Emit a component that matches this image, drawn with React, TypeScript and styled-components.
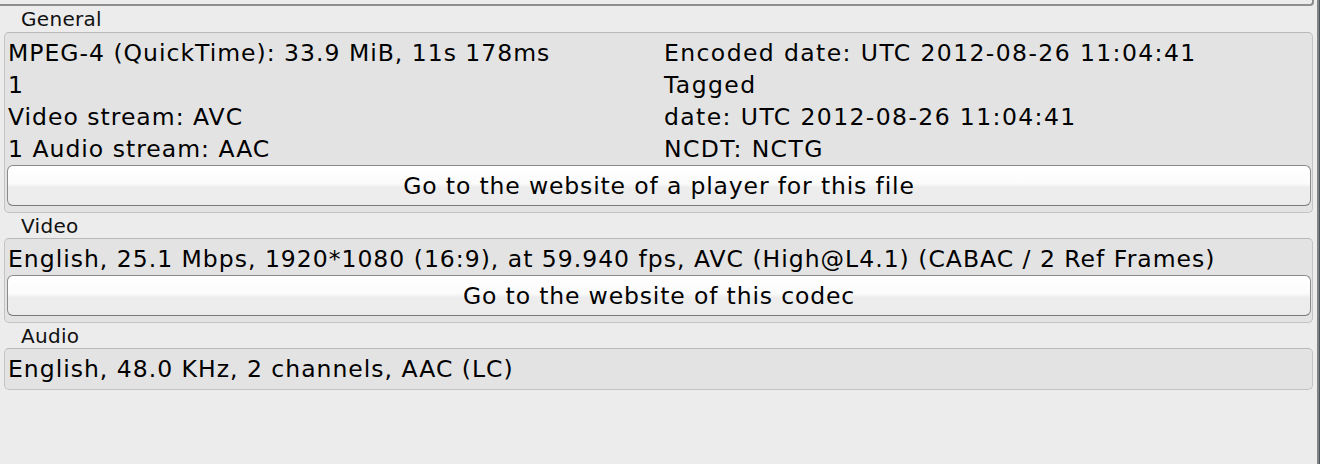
import React from "react";
import styled, { createGlobalStyle } from "styled-components";

const Global = createGlobalStyle`
  html, body { margin: 0; padding: 0; background: #ececec; }
  body { width: 1320px; height: 464px; overflow: hidden; font-family: "DejaVu Sans", "Liberation Sans", sans-serif; }
`;

const Window = styled.div`
  display: flex;
  width: 1320px;
  height: 464px;
  background: #ececec;
`;

const Main = styled.div`
  width: 1317px;
  display: flex;
  flex-direction: column;
  padding: 0 4px 0 4px;
  box-sizing: border-box;
`;

const EdgeLine = styled.div`
  width: 2px;
  background: #848484;
`;

const EdgeDark = styled.div`
  width: 1px;
  background: #4c5663;
`;

const TopStub = styled.div`
  margin-left: -4px;
  width: 1314px;
  height: 6px;
  box-sizing: border-box;
  border-bottom: 2px solid #8e8e8e;
  border-right: 2px solid #8e8e8e;
  border-bottom-right-radius: 4px;
`;

const Label = styled.div<{ $h: number }>`
  height: ${(p) => p.$h}px;
  display: flex;
  align-items: center;
  padding-left: 17px;
  font-size: 20px;
  letter-spacing: 0.3px;
  color: #111;
`;

const Box = styled.div`
  border: 1px solid #c3c3c3;
  border-top-color: #b9b9b9;
  border-radius: 5px;
  background: #e3e3e3;
  padding: 4px 1px 6px 2px;
  display: flex;
  flex-direction: column;
`;

const SingleBox = styled(Box)`
  padding-bottom: 4px;
`;

const Grid = styled.div`
  display: grid;
  grid-template-columns: 656px 1fr;
  padding-left: 1px;
`;

const Column = styled.div<{ $spacing?: number }>`
  letter-spacing: ${(p) => p.$spacing ?? 1}px;
`;

const Line = styled.div`
  height: 32px;
  line-height: 32px;
  font-size: 23.5px;
  color: #000;
  white-space: nowrap;
`;

const Button = styled.button`
  height: 41px;
  width: 100%;
  box-sizing: border-box;
  border: 1px solid #8a8a8a;
  border-bottom-color: #7a7a7a;
  border-radius: 6px;
  background: linear-gradient(#ffffff 0%, #fbfbfb 45%, #ededed 55%, #ececec 100%);
  font-family: "DejaVu Sans", "Liberation Sans", sans-serif;
  font-size: 23.5px;
  letter-spacing: 0.85px;
  color: #000;
  padding: 0;
  display: flex;
  align-items: center;
  justify-content: center;
`;

export default function App() {
  return (
    <>
      <Global />
      <Window>
        <Main>
          <TopStub />
          <Label $h={26}>General</Label>
          <Box>
            <Grid>
              <Column>
                <Line>MPEG-4 (QuickTime): 33.9 MiB, 11s 178ms</Line>
                <Line>1</Line>
                <Line>Video stream: AVC</Line>
                <Line>1 Audio stream: AAC</Line>
              </Column>
              <Column $spacing={1.4}>
                <Line>Encoded date: UTC 2012-08-26 11:04:41</Line>
                <Line>Tagged</Line>
                <Line>date: UTC 2012-08-26 11:04:41</Line>
                <Line>NCDT: NCTG</Line>
              </Column>
            </Grid>
            <Button>Go to the website of a player for this file</Button>
          </Box>
          <Label $h={25}>Video</Label>
          <Box>
            <Grid>
              <Column>
                <Line>English, 25.1 Mbps, 1920*1080 (16:9), at 59.940 fps, AVC (High@L4.1) (CABAC / 2 Ref Frames)</Line>
              </Column>
            </Grid>
            <Button>Go to the website of this codec</Button>
          </Box>
          <Label $h={25}>Audio</Label>
          <SingleBox>
            <Grid>
              <Column>
                <Line>English, 48.0 KHz, 2 channels, AAC (LC)</Line>
              </Column>
            </Grid>
          </SingleBox>
        </Main>
        <EdgeLine />
        <EdgeDark />
      </Window>
    </>
  );
}
